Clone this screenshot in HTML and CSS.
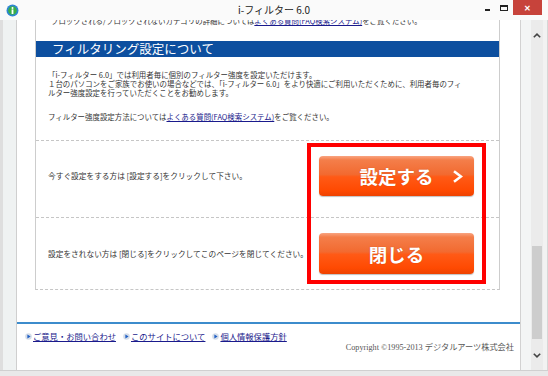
FILE: index.html
```html
<!DOCTYPE html>
<html lang="ja">
<head>
    <meta charset="UTF-8">
    <title>i-フィルター 6.0</title>
    <link rel="stylesheet" href="styles.css">
</head>
<body>
    <div class="window">
        <header class="titlebar">
            <svg class="app-icon" viewBox="0 0 13 13">
                <circle cx="6.5" cy="6.5" r="6" fill="#2f86d2"/>
                <circle cx="6.5" cy="6.5" r="4.3" fill="#39b044"/>
                <circle cx="6.5" cy="3.9" r="1" fill="#fff"/>
                <rect x="5.6" y="5.4" width="1.8" height="4.6" fill="#fff"/>
            </svg>
            <div class="title">i-フィルター 6.0</div>
            <div class="controls">
                <span class="ctl min"><i></i></span>
                <span class="ctl max"><i></i></span>
                <span class="ctl close">✕</span>
            </div>
        </header>

        <div class="client">
            <div class="gutter-left"></div>
            <div class="page">
                <div class="box">
                    <p class="cut">ブロックされる/ブロックされないカテゴリの詳細については<a href="#">よくある質問(FAQ検索システム)</a>をご覧ください。</p>
                    <h2 class="heading">フィルタリング設定について</h2>
                    <div class="intro">
                        <p>「i-フィルター 6.0」では利用者毎に個別のフィルター強度を設定いただけます。<br>１台のパソコンをご家族でお使いの場合などでは、「i-フィルター 6.0」をより快適にご利用いただくために、利用者毎のフィ<br>ルター強度設定を行っていただくことをお勧めします。</p>
                        <p>フィルター強度設定方法については<a href="#">よくある質問(FAQ検索システム)</a>をご覧ください。</p>
                    </div>
                    <div class="actions">
                        <div class="row first">
                            <span>今すぐ設定をする方は [設定する]をクリックして下さい。</span>
                            <a class="btn" href="#">設定する
                                <svg class="chev" viewBox="0 0 11 13"><polyline points="2,1.2 9,6.5 2,11.8" fill="none" stroke="#fff" stroke-width="2.6"/></svg>
                            </a>
                        </div>
                        <div class="row second">
                            <span>設定をされない方は [閉じる]をクリックしてこのページを閉じてください。</span>
                            <a class="btn" href="#">閉じる</a>
                        </div>
                        <div class="mark"></div>
                    </div>
                </div>

                <footer class="footer">
                    <nav class="links">
                        <a href="#"><svg viewBox="0 0 7 7"><circle cx="3.5" cy="3.5" r="3.3" fill="#d5dde8"/><polygon points="2.4,1.6 5.6,3.5 2.4,5.4" fill="#1f5fc4"/></svg>ご意見・お問い合わせ</a>
                        <a href="#"><svg viewBox="0 0 7 7"><circle cx="3.5" cy="3.5" r="3.3" fill="#d5dde8"/><polygon points="2.4,1.6 5.6,3.5 2.4,5.4" fill="#1f5fc4"/></svg>このサイトについて</a>
                        <a href="#"><svg viewBox="0 0 7 7"><circle cx="3.5" cy="3.5" r="3.3" fill="#d5dde8"/><polygon points="2.4,1.6 5.6,3.5 2.4,5.4" fill="#1f5fc4"/></svg>個人情報保護方針</a>
                    </nav>
                    <div class="copyright">Copyright ©1995-2013 デジタルアーツ株式会社</div>
                </footer>
            </div>
            <div class="gutter-right"></div>
            <div class="scrollbar">
                <div class="arrow"><svg viewBox="0 0 8 5"><polyline points="0.8,4.3 4,1.2 7.2,4.3" fill="none" stroke="#444" stroke-width="1.6"/></svg></div>
                <div class="track"><div class="thumb"></div></div>
                <div class="arrow"><svg viewBox="0 0 8 5"><polyline points="0.8,0.7 4,3.8 7.2,0.7" fill="none" stroke="#444" stroke-width="1.6"/></svg></div>
            </div>
            <div class="edge"></div>
        </div>
        <div class="bottom"></div>
    </div>
</body>
</html>
```

FILE: styles.css
```css
* {
    box-sizing: border-box;
}
body {
    margin: 0;
    width: 548px;
    height: 376px;
    overflow: hidden;
    font-family: "Noto Sans CJK JP", "Noto Sans", sans-serif;
    color: #333;
    background: #e6e6e6;
}
a {
    color: #1a1a8c;
}

/* window chrome */
.window {
    height: 376px;
    display: flex;
    flex-direction: column;
}
.titlebar {
    height: 20px;
    flex: none;
    display: grid;
    grid-template-columns: 1fr auto 1fr;
    align-items: center;
    background: #fafafa;
}
.app-icon {
    width: 13px;
    height: 13px;
    margin-left: 6px;
}
.title {
    font-size: 10px;
    color: #222;
    line-height: 20px;
}
.controls {
    justify-self: end;
    align-self: start;
    display: flex;
    height: 15px;
    margin-right: 6px;
}
.ctl {
    display: flex;
    align-items: center;
    justify-content: center;
}
.ctl.min {
    width: 14px;
}
.ctl.min i {
    width: 5px;
    height: 2px;
    margin-top: 4px;
    background: #222;
}
.ctl.max {
    width: 19px;
}
.ctl.max i {
    width: 8px;
    height: 6px;
    border: 1px solid #222;
    border-top-width: 2px;
}
.ctl.close {
    width: 29px;
    background: #c7433b;
    color: #fff;
    font-size: 8px;
    font-weight: bold;
}

.client {
    height: 350px;
    display: flex;
}
.gutter-left {
    width: 17px;
    border-left: 3px solid #dedede;
    border-right: 1px solid #cfcfcf;
    background: #eff2f2;
}
.gutter-right {
    width: 11px;
    border-left: 1px solid #d2d2d2;
    background: #f3f5f5;
}
.edge {
    width: 5px;
    background: #f2f2f2;
    border-right: 1px solid #d6d6d6;
}
.bottom {
    height: 6px;
    border-top: 1px solid #d0d0d0;
    background: #e9e9e9;
}

.scrollbar {
    width: 12px;
    display: flex;
    flex-direction: column;
    background: #ebebeb;
}
.arrow {
    height: 30px;
    display: flex;
    align-items: center;
    justify-content: center;
}
.arrow svg {
    width: 8px;
    height: 5px;
}
.track {
    flex: 1;
}
.thumb {
    width: 10px;
    height: 93px;
    margin: 196px 0 0 1px;
    background: #cdcdcd;
}

/* page */
.page {
    width: 503px;
    background: #fff;
    overflow: hidden;
    display: flex;
    flex-direction: column;
}
.box {
    margin: -4px 20px 0 18px;
    border-left: 1px solid #cdcdcd;
    border-right: 1px solid #cdcdcd;
    border-bottom: 1px dashed #c6c6c6;
    font-size: 7.45px;
}
.cut {
    margin: 0;
    padding-left: 15px;
    line-height: 10px;
    white-space: nowrap;
}
.heading {
    margin: 15px 0 0;
    height: 16px;
    padding-left: 16px;
    background: #0d4f9f;
    color: #fff;
    font-size: 12.5px;
    font-weight: normal;
    line-height: 16px;
}
.intro {
    padding: 13px 12px 19px;
    line-height: 9px;
}
.intro p {
    margin: 0;
    white-space: nowrap;
}
.intro p + p {
    margin-top: 15px;
}

.actions {
    position: relative;
}
.row {
    display: flex;
    align-items: center;
    justify-content: space-between;
    padding: 0 25px 0 12px;
    border-top: 1px dashed #c6c6c6;
    font-size: 7.7px;
}
.row.first {
    height: 77px;
    padding-bottom: 7px;
}
.row.second {
    height: 72px;
}
.btn {
    position: relative;
    width: 155px;
    height: 40px;
    display: flex;
    align-items: center;
    justify-content: center;
    border-radius: 4px;
    background: linear-gradient(#f9a481 0%, #f47e4a 10%, #f26a30 46%, #ff5a16 52%, #ff4a02 85%, #ee4200 100%);
    box-shadow: 0 1px 1px rgba(0, 0, 0, 0.25);
    color: #fff;
    font-size: 18.5px;
    font-weight: bold;
    text-decoration: none;
    text-shadow: 0 0 1px rgba(150, 40, 0, 0.5);
}
.row.second .btn {
    height: 41px;
}
.chev {
    position: absolute;
    right: 11px;
    top: 14px;
    width: 11px;
    height: 13px;
}
.mark {
    position: absolute;
    top: 3px;
    left: 271px;
    width: 179px;
    height: 141px;
    border: 4px solid #f00;
    pointer-events: none;
}

/* footer */
.footer {
    margin-top: 32px;
    border-top: 2px solid #3c8ccc;
}
.links {
    display: flex;
    gap: 7px;
    padding: 6px 0 0 8px;
    font-size: 8.3px;
    line-height: 12px;
}
.links a {
    display: flex;
    align-items: center;
    gap: 1px;
}
.links svg {
    width: 7px;
    height: 7px;
}
.copyright {
    margin-top: 1px;
    padding-right: 6px;
    text-align: right;
    font-family: "Liberation Serif", "Noto Sans CJK JP", serif;
    font-size: 8.2px;
    line-height: 10px;
    color: #555;
}
```
